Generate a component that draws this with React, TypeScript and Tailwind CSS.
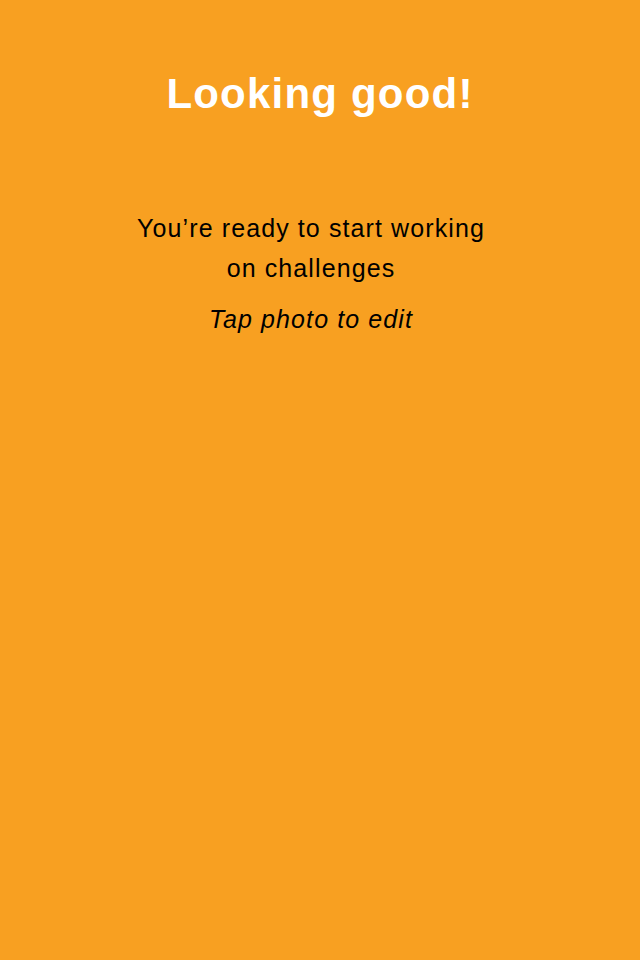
export default function App() {
  return (
    <div
      className="w-[640px] h-[960px] bg-[#f8a021] flex flex-col items-center"
      style={{ fontFamily: '"Liberation Sans", Arial, sans-serif' }}
    >
      <h1 className="pt-[73px] text-[42px] leading-none font-bold text-white tracking-[1.2px]">
        Looking good!
      </h1>
      <div className="mt-[93px] pr-[18px]">
        <div className="w-[360px] flex flex-col items-center text-center text-black">
          <p className="text-[25px] leading-[40px] tracking-[1.1px]">
            You’re ready to start working on challenges
          </p>
          <p className="mt-[11px] text-[25px] leading-[40px] italic tracking-[1.1px]">
            Tap photo to edit
          </p>
        </div>
      </div>
    </div>
  );
}
